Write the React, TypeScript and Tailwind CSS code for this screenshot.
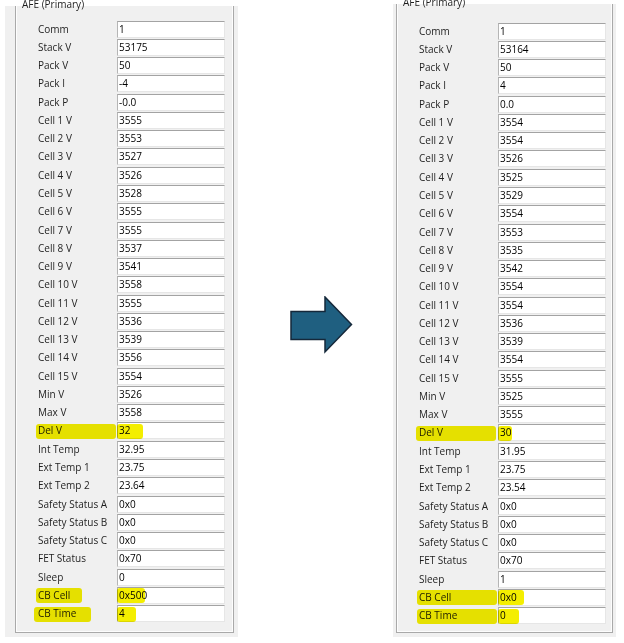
type Row = { label: string; value: string; hl?: { l: number; lw: number; v: number } };

const names = [
  "Comm", "Stack V", "Pack V", "Pack I", "Pack P",
  "Cell 1 V", "Cell 2 V", "Cell 3 V", "Cell 4 V", "Cell 5 V", "Cell 6 V", "Cell 7 V", "Cell 8 V",
  "Cell 9 V", "Cell 10 V", "Cell 11 V", "Cell 12 V", "Cell 13 V", "Cell 14 V", "Cell 15 V",
  "Min V", "Max V", "Del V", "Int Temp", "Ext Temp 1", "Ext Temp 2",
  "Safety Status A", "Safety Status B", "Safety Status C", "FET Status", "Sleep", "CB Cell", "CB Time",
];

const before = [
  "1", "53175", "50", "-4", "-0.0",
  "3555", "3553", "3527", "3526", "3528", "3555", "3555", "3537",
  "3541", "3558", "3555", "3536", "3539", "3556", "3554",
  "3526", "3558", "32", "32.95", "23.75", "23.64",
  "0x0", "0x0", "0x0", "0x70", "0", "0x500", "4",
];

const after = [
  "1", "53164", "50", "4", "0.0",
  "3554", "3554", "3526", "3525", "3529", "3554", "3553", "3535",
  "3542", "3554", "3554", "3536", "3539", "3554", "3555",
  "3525", "3555", "30", "31.95", "23.75", "23.54",
  "0x0", "0x0", "0x0", "0x70", "1", "0x0", "0",
];

// highlighter strokes: l = offset from label start, lw = label stroke width, v = value stroke width
const leftHl: Record<string, { l: number; lw: number; v: number }> = {
  "Del V": { l: -2, lw: 80, v: 26 },
  "CB Cell": { l: -2, lw: 46, v: 28 },
  "CB Time": { l: -4, lw: 57, v: 19 },
};
const rightHl: Record<string, { l: number; lw: number; v: number }> = {
  "Del V": { l: -3, lw: 80, v: 14 },
  "CB Cell": { l: -2, lw: 80, v: 26 },
  "CB Time": { l: -2, lw: 80, v: 21 },
};

const Field = ({ row }: { row: Row }) => (
  <div className="relative flex items-center h-[18.28px]">
    <span className="w-[101px] pl-[22px] text-[10px] text-[#1e1e1e] whitespace-nowrap">{row.label}</span>
    <div className="w-[108px] h-[17px] bg-white border-t-[1.5px] border-l border-r border-b border-t-[#a3a3a3] border-l-[#b5b5b5] border-r-[#e6e6e6] border-b-[#e6e6e6] flex items-center pl-[1px] text-[10px] text-black">
      {row.value}
    </div>
    {row.hl && (
      <>
        <div
          className="absolute top-[2px] h-[15px] rounded-[3px] bg-[#f4ee00] mix-blend-multiply"
          style={{ left: 22 + row.hl.l, width: row.hl.lw }}
        />
        <div
          className="absolute top-[2px] left-[101px] h-[15px] rounded-[3px] bg-[#f4ee00] mix-blend-multiply"
          style={{ width: row.hl.v }}
        />
      </>
    )}
  </div>
);

const Panel = ({
  values,
  hl,
  outer,
  box,
  rowsTop,
}: {
  values: string[];
  hl: Record<string, { l: number; lw: number; v: number }>;
  outer: string;
  box: string;
  rowsTop: string;
}) => (
  <div className={`bg-[#f0f0f0] flex flex-col ${outer}`}>
    <div className={`relative flex-1 border-l border-r border-b border-[#a9a9a9] shadow-[inset_1px_0_0_#fdfdfd,inset_-1px_-1px_0_#fdfdfd] ${box}`}>
      <span className="absolute left-[6px] top-[-9px] text-[10px] text-[#1e1e1e] whitespace-nowrap">
        AFE (Primary)
      </span>
      <div className={`flex flex-col ${rowsTop}`}>
        {names.map((n, i) => (
          <Field key={n} row={{ label: n, value: values[i], hl: hl[n] }} />
        ))}
      </div>
    </div>
  </div>
);

export default function App() {
  return (
    <div className="w-[624px] h-[643px] bg-white flex overflow-hidden font-['Open_Sans','Noto_Sans',sans-serif]">
      <Panel
        values={before}
        hl={leftHl}
        outer="ml-[5px] mt-[6px] w-[233px] h-[631px] pl-[10px] pr-[4px] pb-[4px]"
        box="w-[219px]"
        rowsTop="pt-[14px]"
      />
      <div className="w-[155px] flex">
        <svg className="ml-[52px] mt-[296px]" width="64" height="58" viewBox="0 0 64 58">
          <path
            d="M1 15.5 H35 V1 L61.5 28.5 L35 56 V43.5 H1 Z"
            fill="#1f5f80"
            stroke="#15283a"
            strokeWidth="1.5"
            strokeLinejoin="miter"
          />
        </svg>
      </div>
      <div className="w-[393px] hidden" />
      <Panel
        values={after}
        hl={rightHl}
        outer="mt-[4px] w-[223px] h-[633px] pl-[3px] pr-[3px] pb-[4px]"
        box="w-[217px]"
        rowsTop="pt-[18px]"
      />
    </div>
  );
}
